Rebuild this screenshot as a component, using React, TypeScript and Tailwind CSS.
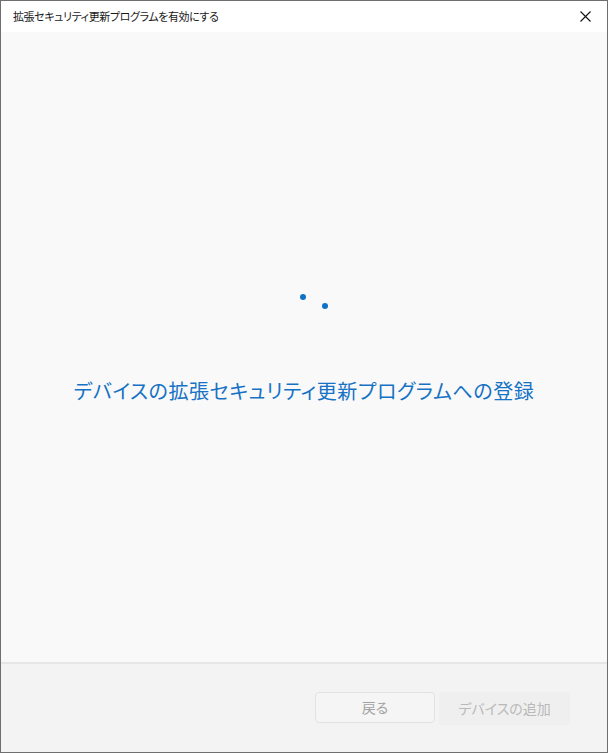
import React from "react";

const jp = "font-['Noto_Sans_CJK_JP','Noto_Sans',sans-serif] [font-feature-settings:'palt']";

const Spinner = () => (
  <svg width="60" height="40" viewBox="0 0 60 40" className="block">
    <circle cx="29" cy="16" r="3" fill="#1171c4" />
    <circle cx="51" cy="25" r="3" fill="#1171c4" />
  </svg>
);

export default function App() {
  return (
    <div className={`w-[608px] h-[753px] border border-[#6f6f6f] flex flex-col bg-white ${jp}`}>
      <div className="h-[31px] flex items-center justify-between bg-white pl-3 pr-4">
        <span className="text-[11px] text-[#1a1a1a] tracking-[-0.4px]">拡張セキュリティ更新プログラムを有効にする</span>
        <svg width="11" height="11" viewBox="0 0 11 11">
          <path d="M0.5 0.5 L10.5 10.5 M10.5 0.5 L0.5 10.5" stroke="#111" strokeWidth="1.1" />
        </svg>
      </div>
      <div className="flex-1 bg-[#f9f9f9] flex flex-col items-center pt-[249px]">
        <Spinner />
        <h1 className="mt-[56px] text-[20px] leading-[28px] text-[#1672c4] font-normal tracking-[0.6px]">
          デバイスの拡張セキュリティ更新プログラムへの登録
        </h1>
      </div>
      <div className="h-[90px] border-t-2 border-[#e6e6e6] bg-[#f3f3f3] flex items-start justify-end gap-1 pt-[28px] pr-[37px]">
        <button className="w-[120px] h-[31px] rounded-[4px] border border-[#e2e2e2] bg-[#f5f5f5] text-[14px] text-[#a3a3a3]">
          戻る
        </button>
        <button className="w-[131px] h-[33px] rounded-[4px] bg-[#efefef] text-[14px] text-[#b9b9b9]">
          デバイスの追加
        </button>
      </div>
    </div>
  );
}
